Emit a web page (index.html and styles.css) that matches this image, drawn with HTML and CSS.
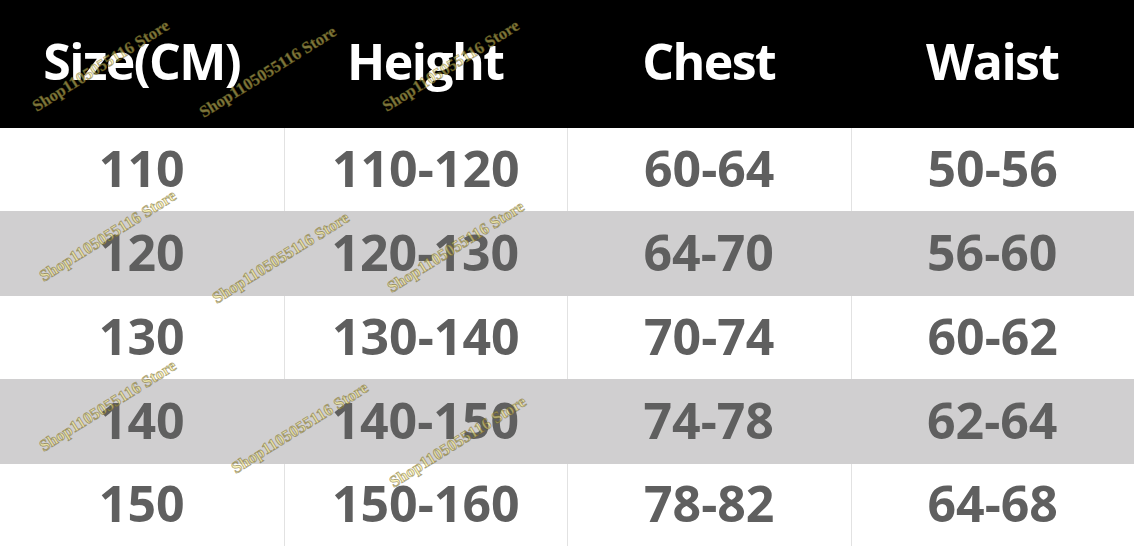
FILE: index.html
```html
<!DOCTYPE html>
<html lang="en">
<head>
<meta charset="utf-8">
<title>Size Chart</title>
<link rel="stylesheet" href="styles.css">
</head>
<body>
<div class="chart">
  <div class="row head">
    <div class="cell">Size(CM)</div>
    <div class="cell">Height</div>
    <div class="cell">Chest</div>
    <div class="cell">Waist</div>
  </div>
  <div class="row light r83">
    <div class="cell">110</div>
    <div class="cell">110-120</div>
    <div class="cell">60-64</div>
    <div class="cell">50-56</div>
  </div>
  <div class="row shade">
    <div class="cell">120</div>
    <div class="cell">120-130</div>
    <div class="cell">64-70</div>
    <div class="cell">56-60</div>
  </div>
  <div class="row light r83">
    <div class="cell">130</div>
    <div class="cell">130-140</div>
    <div class="cell">70-74</div>
    <div class="cell">60-62</div>
  </div>
  <div class="row shade">
    <div class="cell">140</div>
    <div class="cell">140-150</div>
    <div class="cell">74-78</div>
    <div class="cell">62-64</div>
  </div>
  <div class="row light r82">
    <div class="cell">150</div>
    <div class="cell">150-160</div>
    <div class="cell">78-82</div>
    <div class="cell">64-68</div>
  </div>

  <span class="mark" style="left:101px;top:66px">Shop1105055116 Store</span>
  <span class="mark" style="left:268px;top:72px">Shop1105055116 Store</span>
  <span class="mark" style="left:451px;top:66px">Shop1105055116 Store</span>
  <span class="mark" style="left:108px;top:236px">Shop1105055116 Store</span>
  <span class="mark" style="left:281px;top:258px">Shop1105055116 Store</span>
  <span class="mark" style="left:456px;top:247px">Shop1105055116 Store</span>
  <span class="mark" style="left:108px;top:406px">Shop1105055116 Store</span>
  <span class="mark" style="left:300px;top:428px">Shop1105055116 Store</span>
  <span class="mark" style="left:458px;top:442px">Shop1105055116 Store</span>
</div>
</body>
</html>
```

FILE: styles.css
```css
html, body {
  margin: 0;
  padding: 0;
  background: #ffffff;
}

.chart {
  position: relative;
  width: 1134px;
  height: 546px;
  overflow: hidden;
  font-family: "Open Sans", "Noto Sans", "Liberation Sans", sans-serif;
  font-weight: 700;
}

.row {
  display: grid;
  grid-template-columns: repeat(4, 1fr);
}

.cell {
  display: flex;
  align-items: center;
  justify-content: center;
  font-size: 50px;
  line-height: 1;
  color: #5f5f5f;
  padding-bottom: 4px;
  box-sizing: border-box;
}

.head {
  height: 128px;
  background: #000000;
}

.head .cell {
  color: #ffffff;
  letter-spacing: -1.6px;
  padding-bottom: 6px;
}

.light {
  background: #ffffff;
}

.light .cell + .cell {
  border-left: 1px solid #e2e2e2;
}

.r83 {
  height: 83px;
}

.r82 {
  height: 82px;
}

.shade {
  height: 85px;
  background: #d0cfd0;
}

.mark {
  position: absolute;
  transform: translate(-50%, -50%) rotate(-32deg);
  white-space: nowrap;
  font-family: "Liberation Serif", "Times New Roman", serif;
  font-weight: 700;
  font-size: 16.5px;
  color: rgba(255, 240, 125, 0.5);
  -webkit-text-stroke: 0.8px rgba(90, 78, 20, 0.5);
  pointer-events: none;
}
```
